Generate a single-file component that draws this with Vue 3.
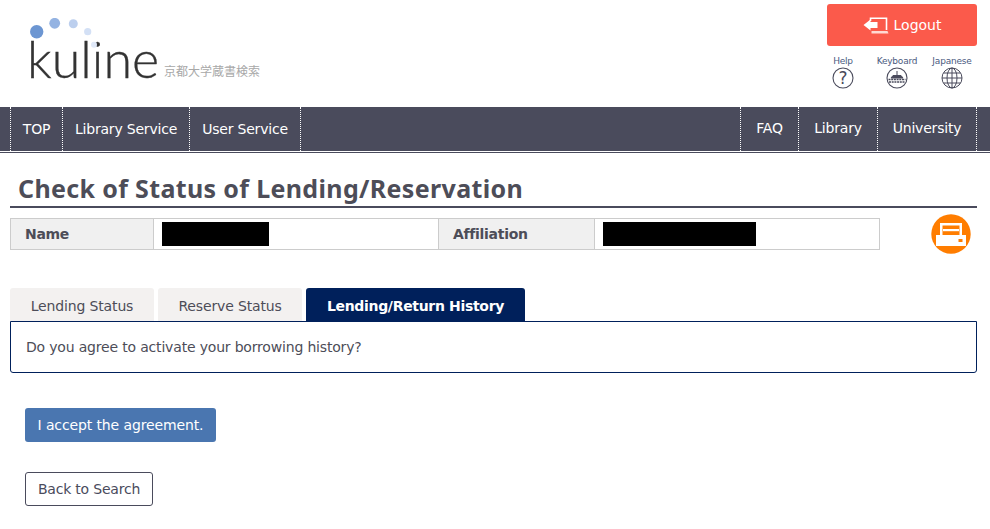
<script setup>
const leftNav = [
  { t: 'TOP', w: 51 },
  { t: 'Library Service', w: 126 },
  { t: 'User Service', w: 110 }
]
const rightNav = [
  { t: 'FAQ', w: 57 },
  { t: 'Library', w: 78 },
  { t: 'University', w: 98 }
]
const tabs = [
  { label: 'Lending Status', w: 144 },
  { label: 'Reserve Status', w: 144 },
  { label: 'Lending/Return History', w: 219, active: true }
]
</script>

<template>
  <div class="page">
    <header class="head">
      <div class="logo">
        <svg class="dots" width="70" height="36" viewBox="0 0 70 36">
          <circle cx="6.7" cy="13.7" r="6.7" fill="#6c96d2" />
          <circle cx="24.7" cy="5.3" r="5.4" fill="#94b3e2" />
          <circle cx="43.3" cy="5.7" r="4.5" fill="#bccfee" />
          <circle cx="57.7" cy="13.7" r="3.6" fill="#d3e0f5" />
          <circle cx="64" cy="26.7" r="3" fill="#e0e9f9" />
        </svg>
        <span class="word">kuline</span>
        <span class="jp">京都大学蔵書検索</span>
      </div>
      <div class="tools">
        <button class="logout">
          <svg width="26" height="17" viewBox="0.5 0 26 17">
            <path d="M8 4 V1.2 H24 V13" fill="none" stroke="#fff" stroke-width="1.6" />
            <path d="M1 8 L8 2.5 V5 H15 V11 H8 V13.5 Z" fill="#fff" />
            <path d="M9 14 H25 L26 16.5 H9 Z" fill="#ffd9d3" />
          </svg>
          Logout
        </button>
        <div class="links">
          <div class="link help">
            <span>Help</span>
            <svg width="22" height="22" viewBox="0 0 22 22">
              <circle cx="11" cy="11" r="10" fill="none" stroke="#4a4b5c" stroke-width="1.1" />
              <text x="11" y="16.5" text-anchor="middle" class="q">?</text>
            </svg>
          </div>
          <div class="link kb">
            <span>Keyboard</span>
            <svg width="22" height="22" viewBox="0 0 22 22">
              <circle cx="11" cy="11" r="10" fill="none" stroke="#4a4b5c" stroke-width="1.1" />
              <path d="M11 4 V8 M7 8.5 H15 L17 11 H5 Z" stroke="#4a4b5c" stroke-width="1" fill="#4a4b5c" />
              <path d="M2.5 12.5 H19.5 M3 15 H19" stroke="#4a4b5c" stroke-width="1.6" stroke-dasharray="2 .7" />
            </svg>
          </div>
          <div class="link ja">
            <span>Japanese</span>
            <svg width="22" height="22" viewBox="0 0 22 22" fill="none" stroke="#4a4b5c" stroke-width="1">
              <circle cx="11" cy="11" r="10" />
              <ellipse cx="11" cy="11" rx="5" ry="10" />
              <path d="M11 1 V21 M1 11 H21 M2.6 6 H19.4 M2.6 16 H19.4" />
            </svg>
          </div>
        </div>
      </div>
    </header>

    <nav class="nav">
      <ul class="group left">
        <li v-for="n in leftNav" :key="n.t" :style="{ width: n.w + 'px' }">{{ n.t }}</li>
      </ul>
      <ul class="group right">
        <li v-for="n in rightNav" :key="n.t" :style="{ width: n.w + 'px' }">{{ n.t }}</li>
      </ul>
    </nav>

    <main class="main">
      <h1 class="title">Check of Status of Lending/Reservation</h1>

      <div class="info">
        <div class="table">
          <div class="th name">Name</div>
          <div class="td v1"><i class="mask m1"></i></div>
          <div class="th aff">Affiliation</div>
          <div class="td v2"><i class="mask m2"></i></div>
        </div>
        <div class="print">
          <svg width="40" height="40" viewBox="0 0 40 40">
            <circle cx="20" cy="20" r="19.7" fill="#ff7d00" />
            <rect x="9" y="9" width="22" height="13" fill="#fff" />
            <rect x="11.5" y="11.5" width="17" height="10" fill="#ff7d00" />
            <rect x="12" y="15" width="16" height="2.2" fill="#fff" />
            <rect x="5" y="21" width="30" height="11" fill="#fff" />
            <rect x="27.5" y="25" width="4" height="3" fill="#ff7d00" />
          </svg>
        </div>
      </div>

      <div class="tabs">
        <div v-for="t in tabs" :key="t.label" class="tab" :class="{ active: t.active }" :style="{ width: t.w + 'px' }">{{ t.label }}</div>
      </div>
      <div class="panel">Do you agree to activate your borrowing history?</div>

      <button class="btn primary">I accept the agreement.</button>
      <button class="btn ghost">Back to Search</button>
    </main>
  </div>
</template>

<style>
html, body { margin: 0; background: #fff; }
</style>

<style scoped>
.page { width: 990px; height: 529px; overflow: hidden; font-family: "DejaVu Sans", sans-serif; color: #4d4d58; }
.head { height: 107px; display: flex; justify-content: space-between; padding: 4px 13px 0 30px; box-sizing: border-box; }
.logo { position: relative; padding-top: 30px; display: flex; align-items: flex-end; height: 48px; width: 260px; }
.dots { position: absolute; left: 0; top: 14px; }
.word { font-family: Lato, sans-serif; font-weight: 300; font-size: 52px; line-height: 48px; color: #333; margin-left: -3px; -webkit-text-stroke: 0.35px #333; }
.jp { font-family: "Noto Sans CJK JP", sans-serif; font-size: 12px; line-height: 14px; color: #a8a8a8; margin: 0 0 4px 5px; white-space: nowrap; }
.tools { width: 150px; display: flex; flex-direction: column; align-items: flex-end; }
.logout { width: 150px; height: 42px; border: 0; border-radius: 3px; background: #fb5a4b; color: #fff; font: 14px "DejaVu Sans", sans-serif; display: flex; align-items: center; justify-content: center; gap: 5px; padding: 0; }
.links { display: flex; margin-top: 10px; position: relative; width: 150px; height: 34px; }
.link { position: absolute; top: 0; display: flex; flex-direction: column; align-items: center; font-size: 9px; line-height: 10px; width: 60px; color: #4a5a80; }
.link span { margin-bottom: 1px; letter-spacing: -0.2px; }
.help { left: -14px; }
.kb { left: 40px; }
.ja { left: 95px; }
.q { font: 17px "DejaVu Sans", sans-serif; fill: #4a4b5c; }
.nav { height: 44px; background: #4a4b5c; display: flex; justify-content: space-between; padding: 0 13px 0 10px; box-sizing: border-box; box-shadow: 0 1px 0 #fff, 0 2px 0 #4a4b5c; color: #fff; font-size: 14px; letter-spacing: -0.2px; }
.group { list-style: none; margin: 0; padding: 0; display: flex; }
.group li { display: flex; align-items: center; justify-content: center; border-right: 1px dotted #fff; white-space: nowrap; }
.group li:first-child { border-left: 1px dotted #fff; }
.right li { padding-bottom: 2px; box-sizing: content-box; height: 42px; }
.main { padding: 0 13px 0 10px; }
.title { margin: 22px 0 0; padding: 0 0 3px 8px; font-family: "Noto Sans", sans-serif; font-size: 25px; line-height: 31px; font-weight: 700; border-bottom: 2px solid #4a4b5c; height: 30px; white-space: nowrap; letter-spacing: 0.35px; }
.info { display: flex; margin-top: 10px; position: relative; }
.table { width: 870px; height: 32px; box-sizing: border-box; border: 1px solid #ccc; display: grid; grid-template-columns: 143px 284px 157px 1fr; font-size: 14px; }
.th { background: #f0f0f0; font-weight: 700; display: flex; align-items: center; padding-left: 14px; border-right: 1px solid #ccc; letter-spacing: -0.3px; }
.aff { border-left: 1px solid #ccc; }
.td { display: flex; align-items: center; padding-left: 8px; }
.mask { display: block; height: 24px; background: #000; }
.m1 { width: 107px; }
.m2 { width: 153px; }
.print { position: absolute; left: 921px; top: -4px; }
.tabs { display: flex; gap: 4px; margin-top: 38px; }
.tab { height: 33px; box-sizing: border-box; padding-top: 2px; background: #f3f1f0; border-radius: 3px 3px 0 0; display: flex; align-items: center; justify-content: center; font-size: 14px; letter-spacing: -0.15px; }
.tab.active { background: #00205b; color: #fff; font-weight: 700; letter-spacing: -0.32px; }
.panel { height: 52px; box-sizing: border-box; border: 1px solid #00205b; border-radius: 0 0 3px 3px; display: flex; align-items: center; padding-left: 15px; font-size: 14px; letter-spacing: -0.18px; }
.btn { display: block; box-sizing: border-box; height: 34px; border-radius: 3px; font: 14px "DejaVu Sans", sans-serif; padding: 0; margin-left: 15px; letter-spacing: -0.12px; }
.primary { width: 191px; margin-top: 35px; background: #4a76b0; color: #fff; border: 0; }
.ghost { width: 128px; margin-top: 30px; background: #fff; color: #4a4b5c; border: 1px solid #4a4b5c; letter-spacing: -0.2px; }
</style>
